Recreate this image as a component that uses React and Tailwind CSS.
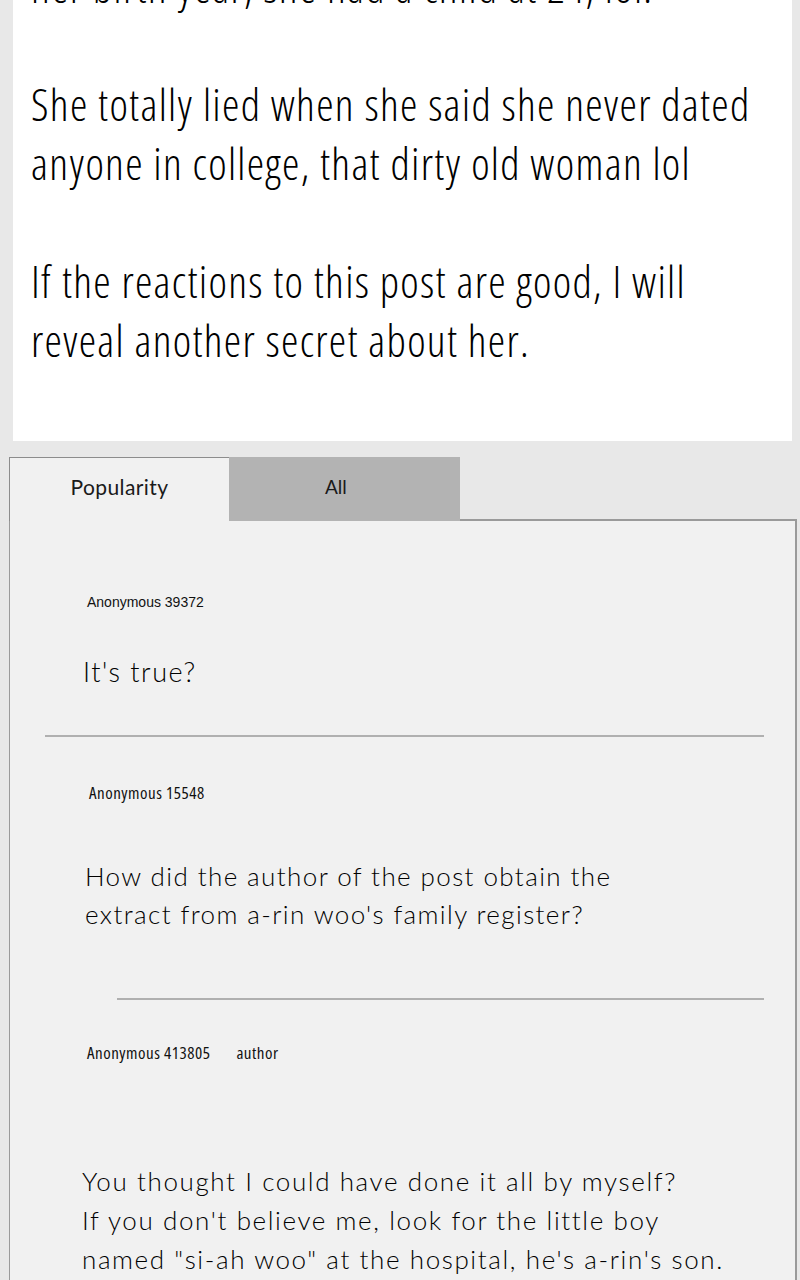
export default function App() {
  const top = { fontFamily: '"Open Sans", "DejaVu Sans", sans-serif' };
  const hand = { fontFamily: 'Lato, "Open Sans", sans-serif' };
  const narrow = { fontFamily: '"Open Sans", "Liberation Sans", sans-serif' };
  const plain = { fontFamily: '"Liberation Sans", Arial, sans-serif' };
  return (
    <div className="w-[800px] h-[1280px] overflow-hidden bg-[#e8e8e8]">
      <div className="ml-[13px] w-[779px] h-[441px] overflow-hidden bg-white">
        <div className="-mt-[43px] pl-[18px] text-[44px] leading-[59px] font-light font-stretch-[75%] tracking-[1.3px] text-black whitespace-nowrap" style={top}>
          <div>her birth year, she had a child at 24, lol.</div>
          <div className="h-[59px]"></div>
          <div>She totally lied when she said she never dated</div>
          <div>anyone in college, that dirty old woman lol</div>
          <div className="h-[59px]"></div>
          <div>If the reactions to this post are good, I will</div>
          <div>reveal another secret about her.</div>
        </div>
      </div>

      <div className="mt-[16px] ml-[9px] w-[788px] flex h-[64px]">
        <div className="w-[220px] h-full pb-[6px] bg-[#f1f1f1] border-l border-t border-[#8c8c8c] flex items-center justify-center text-[21px] tracking-[0.4px] text-[#1a1a1a]" style={hand}>
          Popularity
        </div>
        <div className="w-[231px] h-full pb-[4px] pl-[96px] bg-[#b3b3b3] flex items-center text-[19px] text-[#1a1a1a]" style={hand}>
          All
        </div>
        <div className="flex-1 h-full border-b-2 border-[#9a9a9a]"></div>
      </div>

      <div className="ml-[9px] w-[788px] h-[800px] bg-[#f1f1f1] border-l border-r-2 border-[#9a9a9a] text-black">
        <div className="pt-[71px] pl-[77px] text-[14px] leading-[20px] text-[#111]" style={plain}>Anonymous 39372</div>
        <div className="mt-[39.5px] pl-[73px] text-[27px] leading-[39px] font-light tracking-[1.5px]" style={hand}>It's true?</div>
        <div className="mt-[44.5px] ml-[35px] w-[719px] h-[2px] bg-[#b0b0b0]"></div>

        <div className="mt-[46px] pl-[79px] text-[17px] leading-[20px] font-stretch-[75%] tracking-[0.5px] text-[#111]" style={narrow}>Anonymous 15548</div>
        <div className="mt-[54px] pl-[75px] text-[26px] leading-[38px] font-light tracking-[1.4px] whitespace-nowrap" style={hand}>
          <div>How did the author of the post obtain the</div>
          <div>extract from a-rin woo's family register?</div>
        </div>
        <div className="mt-[65px] ml-[107px] w-[647px] h-[2px] bg-[#b0b0b0]"></div>

        <div className="mt-[43px] pl-[77px] text-[17px] leading-[20px] font-stretch-[75%] tracking-[0.5px] flex text-[#111]" style={narrow}>
          <span>Anonymous 413805</span>
          <span className="ml-[26px]">author</span>
        </div>
        <div className="mt-[98.5px] pl-[72px] text-[26px] leading-[39px] font-light tracking-[1.6px] whitespace-nowrap" style={hand}>
          <div>You thought I could have done it all by myself?</div>
          <div>If you don't believe me, look for the little boy</div>
          <div>named "si-ah woo" at the hospital, he's a-rin's son.</div>
        </div>
      </div>
    </div>
  );
}
